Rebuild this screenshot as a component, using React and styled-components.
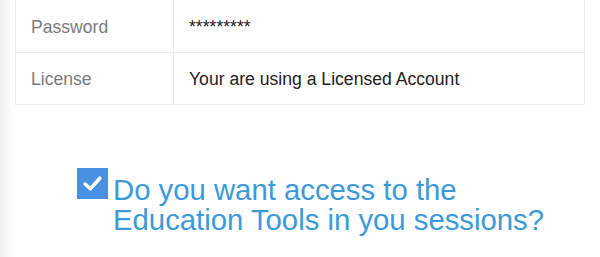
import React from 'react';
import styled, { createGlobalStyle } from 'styled-components';

const GlobalStyle = createGlobalStyle`
  html, body {
    margin: 0;
    padding: 0;
  }
  body {
    background: linear-gradient(to right, #efefef 0, #fbfbfb 10px, #ffffff 16px);
    font-family: "Liberation Sans", Arial, sans-serif;
    min-height: 257px;
  }
`;

const Page = styled.div`
  padding: 0 15px 0 15px;
`;

const InfoTable = styled.table`
  width: 100%;
  border-collapse: collapse;
  background: #fff;
  font-size: 17.6px;

  tr:first-child td {
    border-top-color: transparent;
  }
`;

const Cell = styled.td`
  border: 1px solid #ececec;
  padding: 1px 15px 0 15px;
  height: 50px;
  color: ${(p) => (p.$label ? '#7b7b7b' : '#222')};
  width: ${(p) => (p.$label ? '127px' : 'auto')};
`;

const Question = styled.label`
  display: flex;
  align-items: flex-start;
  gap: 5px;
  margin: 63px 0 0 62px;
  cursor: pointer;
`;

const Box = styled.span`
  flex: none;
  width: 31px;
  height: 31px;
  background: #4a90e2;
  display: flex;
  align-items: center;
  justify-content: center;
`;

const QuestionText = styled.span`
  color: #3d9ad8;
  font-size: 29.3px;
  line-height: 30px;
  padding-top: 7px;
`;

const rows = [
  ['Password', '*********'],
  ['License', 'Your are using a Licensed Account'],
];

export default function App() {
  return (
    <>
      <GlobalStyle />
      <Page>
        <InfoTable>
          <tbody>
            {rows.map(([k, v]) => (
              <tr key={k}>
                <Cell $label>{k}</Cell>
                <Cell>{v}</Cell>
              </tr>
            ))}
          </tbody>
        </InfoTable>
        <Question>
          <Box>
            <svg width="21" height="17" viewBox="0 0 20 16">
              <path d="M3 8.5 L8 13 L17 3" fill="none" stroke="#fff" strokeWidth="3.4" strokeLinecap="round" strokeLinejoin="round" />
            </svg>
          </Box>
          <QuestionText>
            Do you want access to the
            <br />
            Education Tools in you sessions?
          </QuestionText>
        </Question>
      </Page>
    </>
  );
}
